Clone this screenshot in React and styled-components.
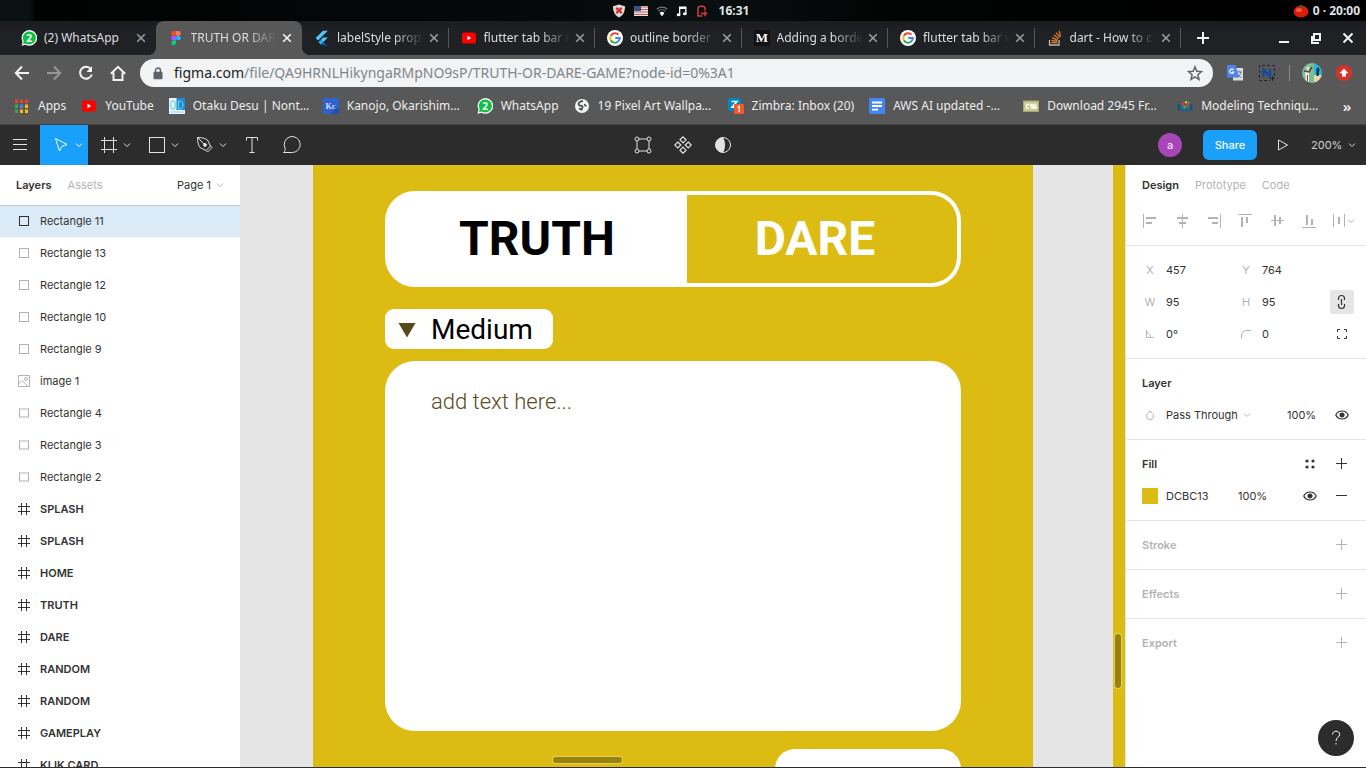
import React from "react";
import styled, { createGlobalStyle, css } from "styled-components";

const UI = `Inter, "Liberation Sans", sans-serif`;
const CHROME = `"Noto Sans", "DejaVu Sans", sans-serif`;
const GOLD = "#dcbc13";

const GlobalStyle = createGlobalStyle`
  *, *::before, *::after { box-sizing: border-box; }
  body { margin: 0; overflow: hidden; font-family: ${UI}; }
  button, input, select, textarea {
    font: inherit; color: inherit; background: none; border: 0; padding: 0; margin: 0;
    outline: none; appearance: none; border-radius: 0;
  }
  ul { list-style: none; margin: 0; padding: 0; }
  a { color: inherit; text-decoration: none; }
  svg { display: block; flex: none; }
`;

const Screen = styled.div`
  display: flex;
  flex-direction: column;
  height: 100vh;
  background: #fff;
`;

/* ---------- system status bar ---------- */
const StatusBar = styled.header`
  display: grid;
  grid-template-columns: 1fr auto 1fr;
  align-items: center;
  flex: none;
  height: 21px;
  padding: 0 6px;
  background: linear-gradient(90deg, #0a1111 0, #0a1111 30px, #010202 36px, #060a0b 45%, #0a1011 50%, #020303 66%, #000 100%);
  color: #dfe3e6;
  font: bold 12px/16px ${CHROME};
`;
const StatusGroup = styled.div`
  display: flex;
  align-items: center;
  gap: ${(p) => (p.$end ? 4 : 7)}px;
  padding-right: ${(p) => (p.$end ? 0 : 5)}px;
  grid-column: ${(p) => p.$col};
  justify-self: ${(p) => (p.$end ? "end" : "center")};
`;
const Clock = styled.time`
  padding-left: 4px;
`;

/* ---------- browser tabs ---------- */
const TabStrip = styled.nav`
  display: flex;
  align-items: stretch;
  flex: none;
  height: 34px;
  padding-left: 9px;
  background: linear-gradient(#1a1c1f, #202124 10px);
  color: #dcdee1;
  font: 12px/16px ${CHROME};
`;
const TabList = styled.div`
  display: flex;
  flex: 1;
  min-width: 0;
`;
const Tab = styled.div`
  display: flex;
  align-items: center;
  flex: 1 1 0;
  min-width: 0;
  max-width: 240px;
  padding: 0 7px 0 12px;
  position: relative;
  ${(p) =>
    p.$active &&
    css`
      background: #585858;
      border-radius: 8px 8px 0 0;
      &::before,
      &::after {
        content: "";
        position: absolute;
        bottom: 0;
        width: 8px;
        height: 8px;
      }
      &::before {
        right: 100%;
        background: radial-gradient(circle at 0 0, transparent 8px, #585858 8px);
      }
      &::after {
        left: 100%;
        background: radial-gradient(circle at 100% 0, transparent 8px, #585858 8px);
      }
    `}
  ${(p) =>
    p.$divider &&
    css`
      &::after {
        content: "";
        position: absolute;
        right: 0;
        top: 7px;
        width: 1px;
        height: 20px;
        background: #55575b;
      }
    `}
`;
const TabButton = styled.button`
  display: flex;
  align-items: center;
  gap: 7px;
  flex: 1;
  min-width: 0;
  text-align: left;
  cursor: pointer;
`;
const TabTitle = styled.span`
  flex: 1;
  min-width: 0;
  overflow: hidden;
  white-space: nowrap;
  ${(p) => p.$fade && css`mask-image: linear-gradient(90deg, #000 calc(100% - 30px), transparent);`}
`;
const TabClose = styled.button`
  display: grid;
  place-items: center;
  width: 16px;
  height: 16px;
  margin-left: 2px;
  color: ${(p) => (p.$active ? "#f4f4f4" : "#9a9ca0")};
`;
const NewTab = styled.button`
  display: grid;
  place-items: center;
  width: 44px;
  color: #f1f3f4;
`;
const WindowControls = styled.div`
  display: flex;
  margin-left: 43px;
  padding-right: 2px;
`;
const WindowButton = styled.button`
  display: grid;
  place-items: center;
  width: 32px;
  color: #f1f3f4;
`;

/* ---------- browser toolbar ---------- */
const AddressRow = styled.div`
  display: flex;
  align-items: center;
  flex: none;
  height: 36px;
  padding: 0 6px;
  background: #585858;
  color: #f1f3f4;
`;
const NavButton = styled.button`
  display: grid;
  place-items: center;
  flex: none;
  width: 32px;
  height: 32px;
  opacity: ${(p) => (p.disabled ? 0.4 : 1)};
`;
const Omnibox = styled.form`
  display: flex;
  align-items: center;
  flex: 1;
  min-width: 0;
  height: 28px;
  margin: 0 6px;
  padding: 0 10px 0 13px;
  border-radius: 14px;
  background: #f1f3f4;
  color: #5f6368;
  font: 14px/20px ${CHROME};
`;
const Host = styled.label`
  padding-left: 11px;
  color: #202124;
`;
const UrlPath = styled.input`
  flex: 1;
  min-width: 0;
  color: #80868b;
`;
const Extensions = styled.div`
  display: flex;
  align-items: center;
`;
const ToolbarDivider = styled.span`
  width: 1px;
  height: 16px;
  margin: 0 6px;
  background: #8a8a8a;
`;
const BookmarkBar = styled.nav`
  display: flex;
  align-items: center;
  flex: none;
  height: 34px;
  padding: 0 8px 3px 14px;
  background: #585858;
  border-bottom: 1px solid #444;
  color: #eceded;
  font: 12px/16px ${CHROME};
`;
const Bookmark = styled.a`
  display: flex;
  align-items: center;
  gap: 8px;
  flex: ${(p) => (p.$long ? "0 1 154px" : "none")};
  min-width: 0;
  padding-right: ${(p) => (p.$long ? 0 : 15)}px;
  white-space: nowrap;
`;
const MoreBookmarks = styled.button`
  margin-left: auto;
  width: 22px;
  font-size: 15px;
  font-weight: 600;
`;

/* ---------- editor toolbar ---------- */
const EditorBar = styled.div`
  display: grid;
  grid-template-columns: 1fr auto 1fr;
  flex: none;
  height: 40px;
  background: #2c2c2c;
  color: #e2e2e2;
  font-size: 11px;
  line-height: 16px;
`;
const ToolGroup = styled.div`
  display: flex;
  align-items: center;
  justify-content: ${(p) => (p.$end ? "flex-end" : "flex-start")};
`;
const Tool = styled.button`
  display: flex;
  align-items: center;
  justify-content: center;
  gap: 4px;
  width: ${(p) => (p.$menu ? 48 : 40)}px;
  height: 40px;
  padding-left: ${(p) => (p.$menu ? 6 : 0)}px;
  background: ${(p) => (p.$active ? "#18a0fb" : "transparent")};
  color: ${(p) => (p.$active ? "#fff" : "inherit")};
`;
const Avatar = styled.span`
  display: grid;
  place-items: center;
  width: 24px;
  height: 24px;
  margin-right: 21px;
  border-radius: 50%;
  background: #a846b9;
  color: #f3e3f6;
  font-weight: 500;
`;
const ShareButton = styled.button`
  width: 54px;
  height: 30px;
  margin-right: 6px;
  border-radius: 6px;
  background: #18a0fb;
  color: #fff;
  font-weight: 500;
`;
const SelectWrap = styled.label`
  display: flex;
  align-items: center;
  gap: 5px;
  color: #333;
  & > svg { color: #b3b3b3; }
`;
const ZoomWrap = styled(SelectWrap)`
  padding: 0 10px 0 8px;
  color: #d0d0d0;
  & > svg { color: #d0d0d0; }
`;
const PlainSelect = styled.select`
  height: 16px;
  line-height: 16px;
`;

/* ---------- workspace ---------- */
const Workspace = styled.div`
  display: flex;
  flex: 1;
  min-height: 0;
  border-bottom: 1px solid #2c2c2c;
  color: #333;
  font-size: 11px;
  line-height: 16px;
`;
const LayersPanel = styled.aside`
  display: flex;
  flex-direction: column;
  flex: none;
  width: 240px;
  overflow: hidden;
  background: #fff;
`;
const PanelHeader = styled.div`
  display: flex;
  align-items: center;
  gap: 16px;
  flex: none;
  height: 40px;
  padding: 0 16px;
  ${(p) => p.$line && css`position: relative; z-index: 1; box-shadow: 0 1px 0 rgba(0, 0, 0, 0.13);`}
`;
const PanelTab = styled.button`
  font-weight: ${(p) => (p.$active ? 600 : 400)};
  color: ${(p) => (p.$active ? "#333" : "#b3b3b3")};
`;
const PagePicker = styled.div`
  margin-left: auto;
`;
const LayerItem = styled.button`
  display: flex;
  align-items: center;
  gap: 8px;
  width: 100%;
  height: 32px;
  padding-left: 16px;
  text-align: left;
  background: ${(p) => (p.$selected ? "#daebf7" : "transparent")};
  font-weight: ${(p) => (p.$frame ? 600 : 400)};
  & > svg { color: ${(p) => (p.$selected || p.$frame ? "#333" : "#b3b3b3")}; }
`;

/* ---------- canvas ---------- */
const Canvas = styled.main`
  position: relative;
  display: grid;
  grid-template-columns: 73px 720px 80px 1fr;
  flex: 1;
  min-width: 0;
  overflow: hidden;
  background: #e5e5e5;
`;
const Artboard = styled.section`
  grid-column: ${(p) => p.$col};
  display: flex;
  flex-direction: column;
  align-items: flex-start;
  min-width: 0;
  padding: ${(p) => (p.$empty ? "0" : "26px 72px 0")};
  background: ${GOLD};
  font-family: Roboto, "Liberation Sans", sans-serif;
  overflow: hidden;
`;
const ModeSwitch = styled.div`
  display: flex;
  flex: none;
  width: 100%;
  height: 96px;
  border: 4px solid #fff;
  border-radius: 30px;
  background: #fff;
  overflow: hidden;
`;
const ModeButton = styled.button`
  flex: ${(p) => (p.$on ? "0 0 298px" : "1")};
  background: ${(p) => (p.$on ? "#fff" : GOLD)};
  color: ${(p) => (p.$on ? "#000" : "#fff")};
  font-size: 48px;
  line-height: 56px;
  font-weight: 700;
  padding-right: ${(p) => (p.$on ? 2 : 14)}px;
`;
const LevelPicker = styled.label`
  display: flex;
  align-items: center;
  gap: 15px;
  flex: none;
  width: 168px;
  height: 40px;
  margin: 22px 0 12px;
  padding: 2px 0 0 13px;
  border-radius: 9px;
  background: #fff;
  color: #000;
  font-size: 28px;
  line-height: 32px;
`;
const LevelSelect = styled.select`
  height: 32px;
`;
const NoteBox = styled.textarea`
  flex: none;
  width: 100%;
  height: 370px;
  padding: 27px 46px;
  border-radius: 30px;
  background: #fff;
  resize: none;
  font-size: 22px;
  line-height: 28px;
  font-weight: 300;
  &::placeholder { color: #5a4c1c; opacity: 1; }
`;
const NextCard = styled.div`
  flex: none;
  align-self: flex-end;
  width: 186px;
  height: 80px;
  margin-top: 18px;
  border-radius: 20px;
  background: #fff;
`;
const ScrollThumb = styled.span`
  position: absolute;
  border-radius: 4px;
  background: #97820f;
  box-shadow: 0 0 0 1px #e6d05a;
  ${(p) =>
    p.$vertical
      ? css`right: 4px; bottom: 79px; width: 6px; height: 54px;`
      : css`left: 313px; bottom: 4px; width: 69px; height: 6px;`}
`;

/* ---------- inspector ---------- */
const Inspector = styled.aside`
  flex: none;
  width: 241px;
  background: #fff;
  border-left: 1px solid #e5e5e5;
`;
const AlignRow = styled.div`
  display: flex;
  align-items: center;
  justify-content: space-between;
  height: 41px;
  padding: 0 11px 9px 16px;
  border-bottom: 1px solid #e5e5e5;
  color: #b3b3b3;
`;
const IconButton = styled.button`
  display: grid;
  place-items: center;
  flex: none;
  height: 24px;
  width: ${(p) => p.$w || 24}px;
  border-radius: 2px;
  background: ${(p) => (p.$on ? "#e5e5e5" : "transparent")};
  color: ${(p) => (p.$muted ? "#b3b3b3" : "inherit")};
`;
const Section = styled.section`
  padding: 8px 12px 8px 16px;
  border-bottom: ${(p) => (p.$last ? "0" : "1px solid #e5e5e5")};
`;
const Row = styled.div`
  display: flex;
  align-items: center;
  height: 32px;
`;
const Field = styled.label`
  display: flex;
  align-items: center;
  gap: 8px;
  flex: none;
  width: 96px;
  & + & { width: 84px; }
`;
const BlendField = styled.div`
  display: flex;
  align-items: center;
  gap: 8px;
`;
const FieldLabel = styled.span`
  display: grid;
  place-items: center;
  flex: none;
  width: 16px;
  color: #b3b3b3;
`;
const FieldInput = styled.input`
  flex: none;
  width: ${(p) => p.$w || 60}px;
  height: 16px;
`;
const SectionTitle = styled.h2`
  flex: 1;
  margin: 0;
  font-size: 11px;
  line-height: 16px;
  font-weight: 600;
  color: ${(p) => (p.$muted ? "#b3b3b3" : "#333")};
`;
const Swatch = styled.button`
  width: 16px;
  height: 16px;
  margin-right: 8px;
  background: ${GOLD};
`;
const Trailing = styled.div`
  display: flex;
  align-items: center;
  gap: 8px;
  margin-left: auto;
`;
const HelpButton = styled.button`
  position: fixed;
  right: 12px;
  bottom: 12px;
  display: grid;
  place-items: center;
  width: 36px;
  height: 36px;
  border-radius: 50%;
  background: #2c2c2c;
  color: #fff;
`;

/* ---------- icons ---------- */
const Line = ({ s = 16, h, w = 1, children }) => (
  <svg width={s} height={h || s} viewBox={`0 0 ${s} ${h || s}`} fill="none" stroke="currentColor" strokeWidth={w}>
    {children}
  </svg>
);
const Chevron = () => <Line s={8}><path d="M1 2.5l3 3 3-3" /></Line>;
const Plus = () => <Line s={12}><path d="M5.500 0v11M0 5.500h11" /></Line>;
const Cross = () => <Line s={10} w={1.6}><path d="M1.2 1.2l7.6 7.6M8.8 1.2L1.2 8.8" /></Line>;
const Eye = () => (
  <Line s={14} h={10} w={1.2}>
    <path d="M.8 5C2 2.4 4.2 1 7 1s5 1.4 6.200 4C12 7.600 9.800 9 7 9S2 7.600.8 5z" />
    <circle cx="7" cy="5" r="2" fill="currentColor" />
  </Line>
);
const WhatsAppIcon = () => (
  <svg width="16" height="16" viewBox="0 0 16 16">
    <path d="M.5 15.700l1.100-4A7.800 7.800 0 1 1 4.600 14.700z" fill="#fff" />
    <path d="M2 14.300l.8-3A6.500 6.500 0 1 1 5 13.500z" fill="#0dc143" />
    <text x="8.200" y="11.600" textAnchor="middle" fontFamily="Noto Sans" fontWeight="700" fontSize="10" fill="#fff">2</text>
  </svg>
);
const FigmaIcon = () => (
  <svg width="16" height="16" viewBox="0 0 16 16">
    <path d="M5.500 1H8v4.700H5.500a2.350 2.350 0 0 1 0-4.700z" fill="#f24e1e" />
    <path d="M8 1h2.500a2.350 2.350 0 0 1 0 4.700H8z" fill="#ff7262" />
    <path d="M5.500 5.700H8v4.700H5.500a2.350 2.350 0 0 1 0-4.700z" fill="#a259ff" />
    <circle cx="10.400" cy="8" r="2.350" fill="#1abcfe" />
    <path d="M5.500 10.400H8v2.400a2.400 2.400 0 1 1-2.500-2.400z" fill="#0acf83" />
  </svg>
);
const FlutterIcon = () => (
  <svg width="16" height="16" viewBox="0 0 16 16">
    <path d="M9 .8h4.800L4 10.500 1.600 8z" fill="#54c5f8" />
    <path d="M9 7.600h4.800L9.200 12.200 6.800 9.900z" fill="#54c5f8" />
    <path d="M6.800 9.900l2.400 2.300 4.600 3.200H9L4.400 12.200z" fill="#01579b" />
    <path d="M4.400 12.200l2.400-2.300 2.400 2.300-2.400 2.300z" fill="#29b6f6" />
  </svg>
);
const YouTubeIcon = () => (
  <svg width="16" height="16" viewBox="0 0 16 16">
    <rect x="1" y="2.500" width="14" height="11" rx="2.600" fill="#f00" />
    <path d="M6.500 5.800v4.400L10.300 8z" fill="#fff" />
  </svg>
);
const GoogleIcon = () => (
  <svg width="16" height="16" viewBox="0 0 16 16" fill="none" strokeWidth="2">
    <circle cx="8" cy="8" r="8" fill="#fff" />
    <path d="M11.500 4.600A4.800 4.800 0 0 0 3.800 5.800" stroke="#ea4335" />
    <path d="M3.800 5.800a4.800 4.800 0 0 0 0 4.400" stroke="#fbbc05" />
    <path d="M3.800 10.200a4.800 4.800 0 0 0 7.300 1.400" stroke="#34a853" />
    <path d="M11.100 11.600A4.800 4.800 0 0 0 12.800 8H8.200" stroke="#4285f4" />
  </svg>
);
const MediumIcon = () => (
  <svg width="16" height="16" viewBox="0 0 16 16">
    <rect width="16" height="16" fill="#111" />
    <text x="8" y="12.400" textAnchor="middle" fontFamily="Liberation Serif" fontWeight="700" fontSize="13" fill="#fff">M</text>
  </svg>
);
const StackIcon = () => (
  <svg width="16" height="16" viewBox="0 0 16 16" fill="none">
    <path d="M2.500 10v5h9.500v-5" stroke="#bcbbbb" strokeWidth="1.300" />
    <path d="M4.200 12.700h6M4.400 10.300l5.900 1.100M5.200 7.600l5.400 2.600M6.900 4.900l4.600 3.800M9.300 2.600l3.400 4.900M12.200 1l1.300 5.600" stroke="#f48024" strokeWidth="1.200" />
  </svg>
);
const AppsIcon = () => (
  <svg width="16" height="16" viewBox="0 0 16 16">
    {["#ea4335", "#ea4335", "#ea4335", "#34a853", "#4285f4", "#fbbc05", "#34a853", "#fbbc05", "#fbbc05"].map((c, i) => (
      <rect key={i} x={1 + (i % 3) * 5} y={1.500 + Math.floor(i / 3) * 5} width="3" height="3.500" fill={c} />
    ))}
  </svg>
);
const OtakuIcon = () => (
  <svg width="16" height="16" viewBox="0 0 16 16" fill="none">
    <rect width="16" height="16" fill="#e8f6fd" />
    <rect x="7.500" width="8.500" height="12" fill="#168fd2" />
    <ellipse cx="4" cy="7" rx="2.400" ry="4" stroke="#8fd2f2" strokeWidth="1.500" />
    <path d="M9.500 3h1.500c2.500 0 3 2 3 4s-.5 4-3 4H9.500z" stroke="#7cd0f5" />
    <path d="M1.500 14h13" stroke="#82c8ea" strokeWidth="1.500" strokeDasharray="1 1" />
  </svg>
);
const KcIcon = () => (
  <svg width="16" height="16" viewBox="0 0 16 16">
    <rect width="16" height="16" fill="#2f62d0" />
    <path d="M7 16l6-6 3 1v5z" fill="#2450ad" />
    <text x="7.500" y="10.800" textAnchor="middle" fontFamily="Liberation Serif" fontWeight="700" fontSize="8" fill="#dbe5fb">Kc</text>
  </svg>
);
const GlobeIcon = () => (
  <svg width="16" height="16" viewBox="0 0 16 16" fill="none">
    <circle cx="8" cy="8" r="7" fill="#f1f3f4" />
    <path d="M9 3.200C6 3.400 4 4.500 4.600 6.600c.6 1.600 3.400.6 4 2.200.4 1.400-1.600 1.600-1 3.600M10 6.500c1 .3 1.200 1.500 2.600 1.200M5 10.200l2 1.200" stroke="#4a4a4a" strokeWidth="1.700" />
  </svg>
);
const ZimbraIcon = () => (
  <svg width="16" height="16" viewBox="0 0 16 16">
    <rect width="13" height="13" rx="2" fill="#0087c3" />
    <path d="M3.500 3.500h5.500L4 9.300h4" fill="none" stroke="#fff" strokeWidth="1.600" />
    <rect x="6" y="6" width="10" height="10" rx="1" fill="#f1592a" />
    <path d="M9.500 9.400l1.700-1.200v6" fill="none" stroke="#fff" strokeWidth="1.200" />
  </svg>
);
const DocsIcon = () => (
  <svg width="16" height="16" viewBox="0 0 16 16">
    <rect width="16" height="16" rx="1" fill="#4285f4" />
    <path d="M3 4.500h10M3 8h10M3 11.700h6" stroke="#fff" strokeWidth="1.800" />
  </svg>
);
const CsgIcon = () => (
  <svg width="16" height="16" viewBox="0 0 16 16">
    <rect x=".5" y="3" width="15" height="10.500" fill="#c9c893" stroke="#a9a76c" />
    <path d="M6 6.300H3.500v3.800H6M9.800 6.300H7.500v1.800h2.300v2H7.500M13.300 6.300H11v3.800h2.300V8.300h-1" fill="none" stroke="#fff" strokeWidth="1.300" />
  </svg>
);
const BookIcon = () => (
  <svg width="16" height="16" viewBox="0 0 16 16">
    <path d="M.5 5.500L8 8l7.500-2.500V12L8 13.500.5 12z" fill="#17527e" />
    <path d="M3 6l5 2 5-2v5.500L8 13l-5-1.500z" fill="#276a86" />
    <circle cx="6" cy="6" r="1.600" fill="#d8403a" /><circle cx="9" cy="4.200" r="1.300" fill="#e0b03a" />
    <circle cx="10.500" cy="7.500" r="1.600" fill="#d8403a" /><circle cx="7.500" cy="9" r="1.300" fill="#5fb04c" />
    <circle cx="11.500" cy="4.800" r="1" fill="#5fb04c" />
  </svg>
);

const Hash = () => <Line><path d="M5.500 2v12M10.500 2v12M2 5.500h12M2 10.500h12" /></Line>;
const Box = ({ wide }) => (
  <Line>{wide ? <><path d="M3.500 3.500v9M12.500 3.500v9" /><path d="M3 4h10M3 12h10" strokeWidth="1.800" opacity=".5" /></> : <rect x="3.500" y="3.500" width="9" height="9" />}</Line>
);
const Picture = () => (
  <Line><rect x="2.500" y="2.500" width="11" height="11" /><circle cx="10" cy="6" r="1.500" /><path d="M2.500 11L6 7.500l5.500 5.500" /></Line>
);

const tabs = [
  { title: "(2) WhatsApp", icon: <WhatsAppIcon />, short: true },
  { title: "TRUTH OR DAR", icon: <FigmaIcon />, active: true },
  { title: "labelStyle prop", icon: <FlutterIcon />, divider: true },
  { title: "flutter tab bar r", icon: <YouTubeIcon />, divider: true },
  { title: "outline border", icon: <GoogleIcon />, divider: true },
  { title: "Adding a borde", icon: <MediumIcon />, divider: true },
  { title: "flutter tab bar v", icon: <GoogleIcon />, divider: true },
  { title: "dart - How to c", icon: <StackIcon />, divider: true },
];

const bookmarks = [
  ["Apps", <AppsIcon />],
  ["YouTube", <YouTubeIcon />],
  ["Otaku Desu | Nont…", <OtakuIcon />, true],
  ["Kanojo, Okarishim…", <KcIcon />, true],
  ["WhatsApp", <WhatsAppIcon />],
  ["19 Pixel Art Wallpa…", <GlobeIcon />, true],
  ["Zimbra: Inbox (20)", <ZimbraIcon />],
  ["AWS AI updated -…", <DocsIcon />, true],
  ["Download 2945 Fr…", <CsgIcon />, true],
  ["Modeling Techniqu…", <BookIcon />, true],
];

const layers = [
  ["Rectangle 11", "box"], ["Rectangle 13", "box"], ["Rectangle 12", "box"], ["Rectangle 10", "box"],
  ["Rectangle 9", "box"], ["image 1", "picture"], ["Rectangle 4", "wide"], ["Rectangle 3", "wide"],
  ["Rectangle 2", "wide"], ["SPLASH", "frame"], ["SPLASH", "frame"], ["HOME", "frame"], ["TRUTH", "frame"],
  ["DARE", "frame"], ["RANDOM", "frame"], ["RANDOM", "frame"], ["GAMEPLAY", "frame"], ["KLIK CARD", "frame"],
];
const layerIcon = { box: <Box />, wide: <Box wide />, picture: <Picture />, frame: <Hash /> };

const alignIcons = [
  ["Align left", <><path d="M1.500 1v14" /><path d="M4 5h10M4 10h6" strokeWidth="2" /></>],
  ["Align horizontal centers", <><path d="M8.500 1v14" /><path d="M3 5h11M5 10h7" strokeWidth="2" /></>],
  ["Align right", <><path d="M14.500 1v14" /><path d="M2 5h10M6 10h6" strokeWidth="2" /></>],
  ["Align top", <><path d="M1 1.500h14" /><path d="M5 4v10M10 4v6" strokeWidth="2" /></>],
  ["Align vertical centers", <><path d="M2 7.500h13" /><path d="M6 2v11M11 4v7" strokeWidth="2" /></>],
  ["Align bottom", <><path d="M1 14.500h14" /><path d="M6 2v10M11 6v6" strokeWidth="2" /></>],
];

function BrowserChrome() {
  return (
    <>
      <StatusBar>
        <StatusGroup $col={2}>
          <svg width="14" height="14" viewBox="0 0 14 14">
            <path d="M7 .5l6 1.700c0 5-1.500 9-6 11.300C2.500 11.200 1 7.200 1 2.200z" fill="#dcdcdc" />
            <path d="M4.300 3.800l5.400 5.400M9.700 3.800L4.300 9.200" stroke="#d3302f" strokeWidth="2.400" />
          </svg>
          <svg width="16" height="12" viewBox="0 0 16 12">
            <rect x="1" y="1" width="14" height="10" fill="#e8e4e4" />
            <path d="M1 2h14M1 4.500h14M1 7h14M1 9.500h14" stroke="#c75a5e" strokeWidth="1.200" />
            <rect x="1" y="1" width="7" height="5" fill="#3b5286" />
          </svg>
          <svg width="12" height="12" viewBox="0 0 12 12" fill="none" stroke="#b9bfc2" strokeWidth="1.200">
            <path d="M.8 4.200a7.600 7.600 0 0 1 10.400 0M2.400 6.200a5.200 5.200 0 0 1 7.200 0" opacity=".6" />
            <path d="M4 8a3 3 0 0 1 4 0L6 10.800z" fill="#fff" stroke="#fff" strokeWidth=".8" />
          </svg>
          <svg width="14" height="12" viewBox="0 0 14 12" fill="#fff">
            <path d="M4 1.500h7.500v7.200h-1.300V4H5.300v6H4z" />
            <ellipse cx="3.600" cy="9.800" rx="1.900" ry="1.500" /><ellipse cx="9.800" cy="8.800" rx="1.900" ry="1.500" />
          </svg>
          <svg width="12" height="12" viewBox="0 0 12 12" fill="none" stroke="#d8393b" strokeWidth="1.500">
            <path d="M9 5.500V3.500Q9 1.200 6.500 1.200H4.500Q2 1.200 2 3.500V11h4.500M5 8.500h6.500M9 6.200v5" />
          </svg>
          <Clock>16:31</Clock>
        </StatusGroup>
        <StatusGroup $col={3} $end>
          <svg width="16" height="14" viewBox="0 0 16 14">
            <ellipse cx="8" cy="7.500" rx="7.400" ry="6" fill="#d81e05" />
            <ellipse cx="6" cy="6" rx="3" ry="2" fill="#f45a3a" />
            <path d="M8 3.500L4.500 2.500l2.500-.8L8 .3l1 1.400 3 .8z" fill="#38662a" />
          </svg>
          <span>0 · 20:00</span>
        </StatusGroup>
      </StatusBar>

      <TabStrip aria-label="Browser tabs">
        <TabList>
          {tabs.map((t, i) => (
            <Tab key={i} $active={t.active} $divider={t.divider}>
              <TabButton>
                {t.icon}
                <TabTitle $fade={!t.short}>{t.title}</TabTitle>
              </TabButton>
              <TabClose $active={t.active} aria-label="Close tab"><Cross /></TabClose>
            </Tab>
          ))}
        </TabList>
        <NewTab aria-label="New tab"><Line s={12} w={2}><path d="M6 0v12M0 6h12" /></Line></NewTab>
        <WindowControls>
          <WindowButton aria-label="Minimize"><Line s={12} w={2}><path d="M1 10h10" /></Line></WindowButton>
          <WindowButton aria-label="Restore"><Line s={12} w={2}><rect x="4" y="2" width="6" height="6" /><path d="M2 4v7M1 11h8" /></Line></WindowButton>
          <WindowButton aria-label="Close window"><Line s={12} w={2}><path d="M1.500 1.500l9 9M10.500 1.500l-9 9" /></Line></WindowButton>
        </WindowControls>
      </TabStrip>

      <AddressRow>
        <NavButton aria-label="Back"><Line w={2}><path d="M15 8H2M8 1.500L1.800 8 8 14.500" /></Line></NavButton>
        <NavButton aria-label="Forward" disabled><Line w={2}><path d="M1 8h13M8 1.500L14.200 8 8 14.500" /></Line></NavButton>
        <NavButton aria-label="Reload"><Line w={2}><path d="M12.800 4A6 6 0 1 0 13.800 9.500" /><path d="M14 1v6H8.500z" fill="currentColor" stroke="none" /></Line></NavButton>
        <NavButton aria-label="Home"><Line w={2}><path d="M.8 8.800L8 1.800l7.200 7M3.500 7.500V15h9V7.500" /></Line></NavButton>
        <Omnibox onSubmit={(e) => e.preventDefault()}>
          <svg width="10" height="13" viewBox="0 0 10 13"><path d="M2.500 6V3.500a2.500 2.500 0 0 1 5 0V6" fill="none" stroke="#5f6368" strokeWidth="1.500" /><rect x=".5" y="4.800" width="9" height="7.500" rx="1" fill="#5f6368" /></svg>
          <Host htmlFor="url">figma.com</Host>
          <UrlPath id="url" defaultValue="/file/QA9HRNLHikyngaRMpNO9sP/TRUTH-OR-DARE-GAME?node-id=0%3A1" />
          <Line w={1.500}><path d="M8 1.800l1.800 4.400 4.700.4-3.600 3.100 1.100 4.600L8 11.800l-4 2.500 1.100-4.600L1.500 6.600l4.700-.4z" /></Line>
        </Omnibox>
        <Extensions>
          <NavButton aria-label="Translate">
            <svg width="16" height="16" viewBox="0 0 16 16">
              <rect x="6" y="3" width="10" height="12.500" fill="#dcdcdc" />
              <path d="M9 7h6M12 5.500V7M10 8.500c1 2 3 3.500 4.500 4M14 7c-.5 2.500-2.500 4.500-4 5.500" stroke="#5f7f96" fill="none" />
              <path d="M0 0h8.500l3.500 12.500H1a1 1 0 0 1-1-1z" fill="#4c83ea" />
              <path d="M6.500 5a2.100 2.100 0 1 0 .3 2H5" stroke="#fff" strokeWidth="1.200" fill="none" />
            </svg>
          </NavButton>
          <NavButton aria-label="Nimbus capture">
            <svg width="16" height="16" viewBox="0 0 16 16" fill="none">
              <path d="M15.500 11V.5H.5v15H11" stroke="#222" strokeDasharray="3 2" />
              <path d="M4.500 12V4.500l6.500 7V4" stroke="#0c4da2" strokeWidth="2.300" />
              <path d="M13.500 11v5M11 13.500h5" stroke="#222" />
            </svg>
          </NavButton>
          <ToolbarDivider />
          <NavButton aria-label="Profile">
            <svg width="20" height="20" viewBox="0 0 20 20">
              <clipPath id="face"><circle cx="10" cy="10" r="10" /></clipPath>
              <g clipPath="url(#face)">
                <path d="M0 0h12v20H0z" fill="#79c095" /><path d="M12 0h8v12h-8z" fill="#2fb5d9" /><path d="M12 12h8v8h-8z" fill="#ead9a6" />
                <path d="M3 8l4-1v12H4z" fill="#f0efe9" /><path d="M2 8l5 1 3-5" stroke="#6d3a3a" fill="none" strokeWidth="1.500" />
                <circle cx="6" cy="5" r="1.500" fill="#f1e5d6" /><path d="M16 4l1.500 2-1 7h-2V6z" fill="#10304a" /><path d="M5 12h1v7H5z" fill="#a03434" />
              </g>
            </svg>
          </NavButton>
          <NavButton aria-label="Update">
            <svg width="16" height="16" viewBox="0 0 16 16"><circle cx="8" cy="8" r="8" fill="#d93025" /><path d="M8 3.500l4.500 4.800H10v3.400H6V8.300H3.500z" fill="#fff" /></svg>
          </NavButton>
        </Extensions>
      </AddressRow>

      <BookmarkBar aria-label="Bookmarks">
        {bookmarks.map(([label, icon, long]) => (
          <Bookmark key={label} href="#" $long={long}>{icon}{label}</Bookmark>
        ))}
        <MoreBookmarks aria-label="More bookmarks">»</MoreBookmarks>
      </BookmarkBar>
    </>
  );
}

function Toolbar() {
  return (
    <EditorBar>
      <ToolGroup>
        <Tool aria-label="Menu"><Line><path d="M1 2.500h14M1 7.500h14M1 12.500h14" /></Line></Tool>
        <Tool aria-label="Move" $menu $active><Line s={20}><path d="M4.500 3.500l11.500 6-5 1.800-2.500 4.700z" /></Line><Chevron /></Tool>
        <Tool aria-label="Frame" $menu><Line s={20}><path d="M5.500 2v16M14.500 2v16M2 5.500h16M2 14.500h16" /></Line><Chevron /></Tool>
        <Tool aria-label="Shape" $menu><Line s={20}><rect x="2.500" y="2.500" width="15" height="15" /></Line><Chevron /></Tool>
        <Tool aria-label="Pen" $menu>
          <Line s={20}><path d="M2.500 2.500c4 0 8 .8 10 2.500l3 6-4.500 4.500-6-3c-1.700-2-2.500-6-2.500-10zM2.500 2.500L9 9M11 15.500l1.500 1.500 4.500-4.500-1.500-1.500" /><circle cx="10" cy="10" r="1.400" fill="currentColor" /></Line>
          <Chevron />
        </Tool>
        <Tool aria-label="Text"><Line><path d="M2.500 3.500v-3h11v3M8 .5v15M5.500 15.500h5" /></Line></Tool>
        <Tool aria-label="Comment"><Line s={20}><path d="M1.500 17.500c1.500-1 2-2.500 1.500-4.500a8 8 0 1 1 7.500 4.500z" /></Line></Tool>
      </ToolGroup>
      <ToolGroup>
        <Tool aria-label="Edit object">
          <Line s={18}><path d="M5 3h8M5 15h8M3 5v8M15 5v8" /><circle cx="3" cy="3" r="2" /><circle cx="15" cy="3" r="2" /><circle cx="3" cy="15" r="2" /><circle cx="15" cy="15" r="2" /></Line>
        </Tool>
        <Tool aria-label="Create component">
          <Line s={18} w={1.200}><path d="M9 .8l3 3-3 3-3-3zM9 11.200l3 3-3 3-3-3zM3.800 6l3 3-3 3-3-3zM14.200 6l3 3-3 3-3-3z" /></Line>
        </Tool>
        <Tool aria-label="Use as mask">
          <Line s={18}><circle cx="9" cy="9" r="7.500" /><path d="M9 1.500a7.500 7.500 0 0 0 0 15c1.500-2 2-5 2-7.500S10.500 3.500 9 1.500z" fill="currentColor" stroke="none" /></Line>
        </Tool>
      </ToolGroup>
      <ToolGroup $end>
        <Avatar>a</Avatar>
        <ShareButton>Share</ShareButton>
        <Tool aria-label="Present"><Line s={12}><path d="M1.500 1l9 5-9 5z" /></Line></Tool>
        <ZoomWrap>
          <PlainSelect aria-label="Zoom"><option>200%</option></PlainSelect>
          <Chevron />
        </ZoomWrap>
      </ToolGroup>
    </EditorBar>
  );
}

function DesignPanel() {
  return (
    <Inspector>
      <PanelHeader>
        <PanelTab $active>Design</PanelTab>
        <PanelTab>Prototype</PanelTab>
        <PanelTab>Code</PanelTab>
      </PanelHeader>
      <AlignRow>
        {alignIcons.map(([name, shape]) => (
          <IconButton key={name} $w={16} aria-label={name}><Line>{shape}</Line></IconButton>
        ))}
        <IconButton $w={22} aria-label="Distribute">
          <Line s={22} h={16}><path d="M.5 1v13M11.500 1v13" /><path d="M6 4v7" strokeWidth="2" /><path d="M15 6.500l3 3 3-3" /></Line>
        </IconButton>
      </AlignRow>
      <Section>
        <Row>
          <Field><FieldLabel>X</FieldLabel><FieldInput defaultValue="457" /></Field>
          <Field><FieldLabel>Y</FieldLabel><FieldInput defaultValue="764" /></Field>
        </Row>
        <Row>
          <Field><FieldLabel>W</FieldLabel><FieldInput defaultValue="95" /></Field>
          <Field><FieldLabel>H</FieldLabel><FieldInput defaultValue="95" /></Field>
          <Trailing>
            <IconButton $on aria-label="Constrain proportions">
              <Line><path d="M4.500 6V4.500a3 3 0 0 1 6 0V6M4.500 10v1.500a3 3 0 0 0 6 0V10M7.500 5v6" strokeWidth="1.200" /></Line>
            </IconButton>
          </Trailing>
        </Row>
        <Row>
          <Field><FieldLabel><Line s={10}><path d="M1.500 1v7.500H9M1.500 3.500c2.500 0 4 2 4 5" /></Line></FieldLabel><FieldInput aria-label="Rotation" defaultValue="0°" /></Field>
          <Field><FieldLabel><Line s={10}><path d="M.5 9.500V7Q.5 1.500 6 1.500h4" /></Line></FieldLabel><FieldInput aria-label="Corner radius" defaultValue="0" /></Field>
          <Trailing>
            <IconButton aria-label="Independent corners">
              <Line s={10}><path d="M.5 3V.5H3M7 .5h2.500V3M9.500 7v2.500H7M3 9.500H.5V7" /></Line>
            </IconButton>
          </Trailing>
        </Row>
      </Section>
      <Section>
        <Row><SectionTitle>Layer</SectionTitle></Row>
        <Row>
          <BlendField>
            <FieldLabel><Line s={10}><path d="M5 1C3.500 2.700 1.500 4 1.500 6a3.500 3.500 0 0 0 7 0C8.500 4 6.500 2.700 5 1z" /></Line></FieldLabel>
            <SelectWrap><PlainSelect aria-label="Blend mode"><option>Pass Through</option></PlainSelect><Chevron /></SelectWrap>
          </BlendField>
          <Trailing>
            <FieldInput $w={35} aria-label="Layer opacity" defaultValue="100%" />
            <IconButton aria-label="Toggle layer visibility"><Eye /></IconButton>
          </Trailing>
        </Row>
      </Section>
      <Section>
        <Row>
          <SectionTitle>Fill</SectionTitle>
          <Trailing>
            <IconButton aria-label="Fill styles">
              <svg width="10" height="10" viewBox="0 0 10 10" fill="#333"><circle cx="2" cy="2" r="1.600" /><circle cx="8" cy="2" r="1.600" /><circle cx="2" cy="8" r="1.600" /><circle cx="8" cy="8" r="1.600" /></svg>
            </IconButton>
            <IconButton aria-label="Add fill"><Plus /></IconButton>
          </Trailing>
        </Row>
        <Row>
          <Swatch aria-label="Fill color" />
          <FieldInput $w={72} aria-label="Fill hex" defaultValue="DCBC13" />
          <FieldInput $w={40} aria-label="Fill opacity" defaultValue="100%" />
          <Trailing>
            <IconButton aria-label="Toggle fill visibility"><Eye /></IconButton>
            <IconButton aria-label="Remove fill"><Line s={12}><path d="M0 5.500h11" /></Line></IconButton>
          </Trailing>
        </Row>
      </Section>
      {["Stroke", "Effects", "Export"].map((name) => (
        <Section key={name} $last={name === "Export"}>
          <Row>
            <SectionTitle $muted>{name}</SectionTitle>
            <IconButton $muted aria-label={`Add ${name}`}><Plus /></IconButton>
          </Row>
        </Section>
      ))}
    </Inspector>
  );
}

export default function App() {
  return (
    <Screen>
      <GlobalStyle />
      <BrowserChrome />
      <Toolbar />
      <Workspace>
        <LayersPanel>
          <PanelHeader $line>
            <PanelTab $active>Layers</PanelTab>
            <PanelTab>Assets</PanelTab>
            <PagePicker>
              <SelectWrap><PlainSelect aria-label="Page"><option>Page 1</option></PlainSelect><Chevron /></SelectWrap>
            </PagePicker>
          </PanelHeader>
          <ul>
            {layers.map(([name, kind], i) => (
              <li key={i}>
                <LayerItem $selected={i === 0} $frame={kind === "frame"}>{layerIcon[kind]}{name}</LayerItem>
              </li>
            ))}
          </ul>
        </LayersPanel>
        <Canvas>
          <Artboard $col={2}>
            <ModeSwitch>
              <ModeButton $on>TRUTH</ModeButton>
              <ModeButton>DARE</ModeButton>
            </ModeSwitch>
            <LevelPicker>
              <svg width="18" height="16" viewBox="0 0 18 16"><path d="M.5 1h17L9 15.500z" fill="#574a1d" /></svg>
              <LevelSelect aria-label="Difficulty"><option>Medium</option></LevelSelect>
            </LevelPicker>
            <NoteBox aria-label="Card text" placeholder="add text here..." />
            <NextCard />
          </Artboard>
          <Artboard $col={4} $empty />
          <ScrollThumb $vertical />
          <ScrollThumb />
        </Canvas>
        <DesignPanel />
      </Workspace>
      <HelpButton aria-label="Help">
        <Line s={10} h={16}><path d="M1.500 4.500C1.500 2.500 3 1.200 5 1.200s3.700 1.300 3.700 3.200c0 2.800-3.700 2.800-3.700 6.600" /><path d="M5 13v1.500" /></Line>
      </HelpButton>
    </Screen>
  );
}
